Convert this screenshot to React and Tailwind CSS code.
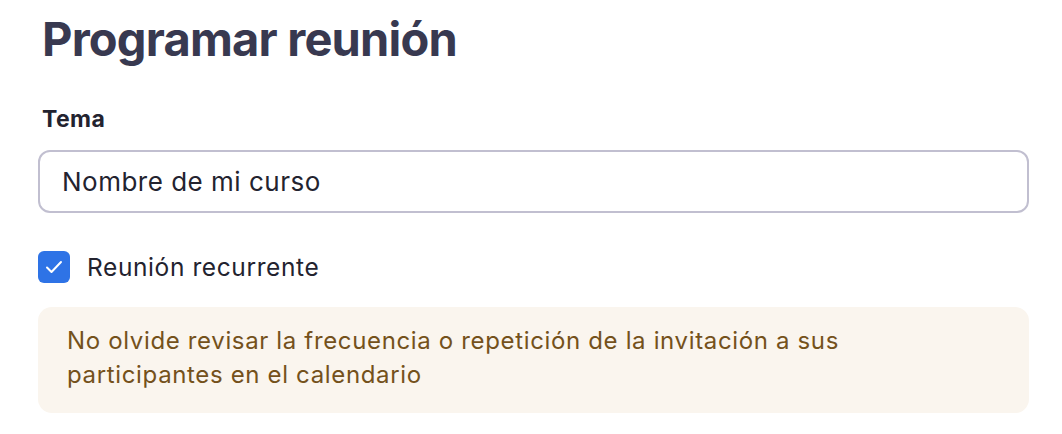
import React from 'react';

const App = () => {
  return (
    <div className="w-[1062px] h-[434px] bg-white overflow-hidden" style={{ fontFamily: 'Inter, "Noto Sans", sans-serif' }}>
      <div className="pl-[38px] pr-[33px] pt-[7px]">
        <h1 className="pl-[4px] text-[47px] leading-[64px] font-bold text-[#383950] tracking-[-0.8px]">Programar reunión</h1>
        <label className="block pl-[4px] mt-[34px] text-[23px] leading-[28px] font-bold text-[#23232f] tracking-[0.4px]">Tema</label>
        <div className="mt-[17px] h-[63px] border-2 border-[#c1bfd0] rounded-[12px] flex items-center px-[22px]">
          <span className="text-[26px] text-[#23232f] tracking-[0.5px]">Nombre de mi curso</span>
        </div>
        <div className="mt-[38px] flex items-center gap-[17px] h-[32px]">
          <div className="w-[32px] h-[32px] rounded-[6px] bg-[#2e73e6] flex items-center justify-center">
            <svg width="18" height="14" viewBox="0 0 18 14" fill="none">
              <path d="M2 7.5L6.5 12L16 2" stroke="white" strokeWidth="2" strokeLinecap="round" strokeLinejoin="round" />
            </svg>
          </div>
          <span className="text-[24.5px] leading-[32px] text-[#23232f] tracking-[0.6px]">Reunión recurrente</span>
        </div>
        <div className="mt-[24px] bg-[#faf5ee] rounded-[14px] px-[29px] pt-[17px] pb-[21px]">
          <p className="text-[24px] leading-[34px] text-[#74511b] tracking-[0.65px]">
            No olvide revisar la frecuencia o repetición de la invitación a sus<br />participantes en el calendario
          </p>
        </div>
      </div>
    </div>
  );
};

export default App;
